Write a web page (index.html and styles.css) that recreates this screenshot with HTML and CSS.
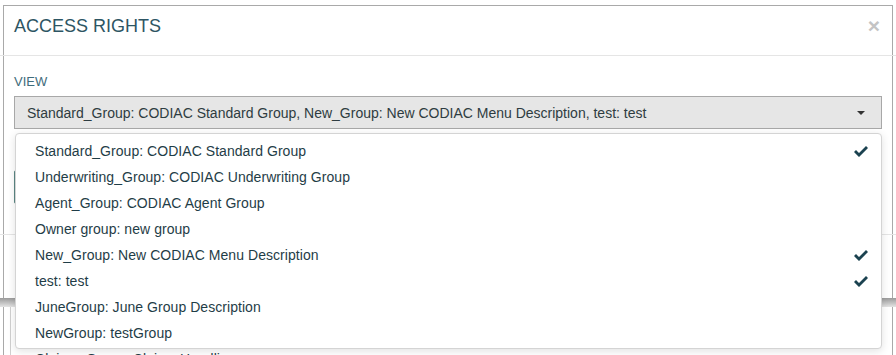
FILE: index.html
```html
<!DOCTYPE html>
<html lang="en">
<head>
    <meta charset="UTF-8">
    <title>Access Rights</title>
    <link rel="stylesheet" href="styles.css">
</head>
<body>
    <div class="modal">
        <div class="modal-header">
            <h4 class="modal-title">ACCESS RIGHTS</h4>
            <button type="button" class="close">&times;</button>
        </div>
        <div class="modal-body">
            <label class="field-label">VIEW</label>
            <div class="multi-select">
                <div class="select-box">
                    <span class="select-text">Standard_Group: CODIAC Standard Group, New_Group: New CODIAC Menu Description, test: test</span>
                    <span class="caret"></span>
                </div>
                <ul class="dropdown">
                    <li class="selected">Standard_Group: CODIAC Standard Group
                        <svg class="check" width="14" height="11" viewBox="0 0 14 11"><polygon points="0,6 2,4 5,7 12,0 14,2 5,11"/></svg>
                    </li>
                    <li>Underwriting_Group: CODIAC Underwriting Group</li>
                    <li>Agent_Group: CODIAC Agent Group</li>
                    <li>Owner group: new group</li>
                    <li class="selected">New_Group: New CODIAC Menu Description
                        <svg class="check" width="14" height="11" viewBox="0 0 14 11"><polygon points="0,6 2,4 5,7 12,0 14,2 5,11"/></svg>
                    </li>
                    <li class="selected">test: test
                        <svg class="check" width="14" height="11" viewBox="0 0 14 11"><polygon points="0,6 2,4 5,7 12,0 14,2 5,11"/></svg>
                    </li>
                    <li>JuneGroup: June Group Description</li>
                    <li>NewGroup: testGroup</li>
                    <li>Claims_Group: Claims Handling</li>
                </ul>
            </div>
            <div class="edit-field"></div>
        </div>
        <div class="modal-footer">
            <button type="button" class="btn-save">Save</button>
        </div>
    </div>
    <div class="modal-shadow"></div>
    <div class="underlay">
        <div class="underlay-inner"></div>
    </div>
</body>
</html>
```

FILE: styles.css
```css
* {
    margin: 0;
    padding: 0;
    box-sizing: border-box;
}

body {
    font-family: "Liberation Sans", Arial, sans-serif;
    background: #fff;
    overflow: hidden;
}

.modal {
    margin: 5px 3px 0 3px;
    border: 1px solid #a9a9a9;
    border-bottom: none;
    background: #fff;
}

.modal-header {
    display: flex;
    justify-content: space-between;
    align-items: flex-start;
    margin: 0 -4px;
    padding: 10px 16px 19px 14px;
    border-bottom: 1px solid #e5e5e5;
}

.modal-title {
    font-size: 18px;
    font-weight: normal;
    line-height: 20px;
    color: #2d5563;
}

.close {
    border: none;
    background: none;
    font-family: "Liberation Sans", Arial, sans-serif;
    font-size: 21px;
    font-weight: bold;
    line-height: 20px;
    color: #c4c4c4;
    cursor: pointer;
}

.modal-body {
    padding: 17px 10px 30px 10px;
}

.field-label {
    display: block;
    font-size: 13px;
    line-height: 18px;
    color: #3f6c7b;
    margin-bottom: 5px;
}

.multi-select {
    position: relative;
}

.select-box {
    display: flex;
    justify-content: space-between;
    align-items: center;
    height: 33px;
    padding: 6px 12px;
    background: #e6e6e6;
    border: 1px solid #a8a8a8;
    font-size: 14px;
    line-height: 20px;
    color: #2e3c41;
}

.caret {
    width: 0;
    height: 0;
    margin-right: 4px;
    border-left: 4px solid transparent;
    border-right: 4px solid transparent;
    border-top: 4px solid #333;
}

.dropdown {
    position: absolute;
    top: calc(100% + 4px);
    left: 1px;
    right: 0;
    height: 216px;
    padding-top: 4px;
    list-style: none;
    background: #fff;
    border: 1px solid #d4d4d4;
    border-radius: 4px;
    box-shadow: 0 2px 8px rgba(0, 0, 0, 0.12);
    z-index: 10;
}

.dropdown li {
    display: flex;
    justify-content: space-between;
    align-items: center;
    height: 26px;
    padding: 0 13px 0 19px;
    font-size: 14px;
    line-height: 26px;
    letter-spacing: 0.05px;
    color: #1f3d47;
}

.check {
    fill: #1b4250;
}

.edit-field {
    height: 34px;
    margin-top: 41px;
    border: 1px solid #5c8885;
    border-radius: 2px;
}

.modal-footer {
    display: flex;
    justify-content: flex-end;
    margin: 0 -4px;
    padding: 15px 14px 14px 14px;
    border-top: 1px solid #e5e5e5;
}

.btn-save {
    height: 34px;
    width: 80px;
    border: 1px solid #6f9352;
    background: #7ea15f;
    color: #fff;
    font-family: "Liberation Sans", Arial, sans-serif;
    font-size: 14px;
}

.modal-shadow {
    height: 9px;
    background: linear-gradient(to bottom, #9a9a9a, #e4e4e4);
}

.underlay {
    height: 60px;
    margin: 0 3px;
    padding-left: 6px;
    border-left: 1px solid #a9a9a9;
    border-right: 1px solid #a9a9a9;
}

.underlay-inner {
    height: 100%;
    border-left: 1px solid #d0d0d0;
}
```
